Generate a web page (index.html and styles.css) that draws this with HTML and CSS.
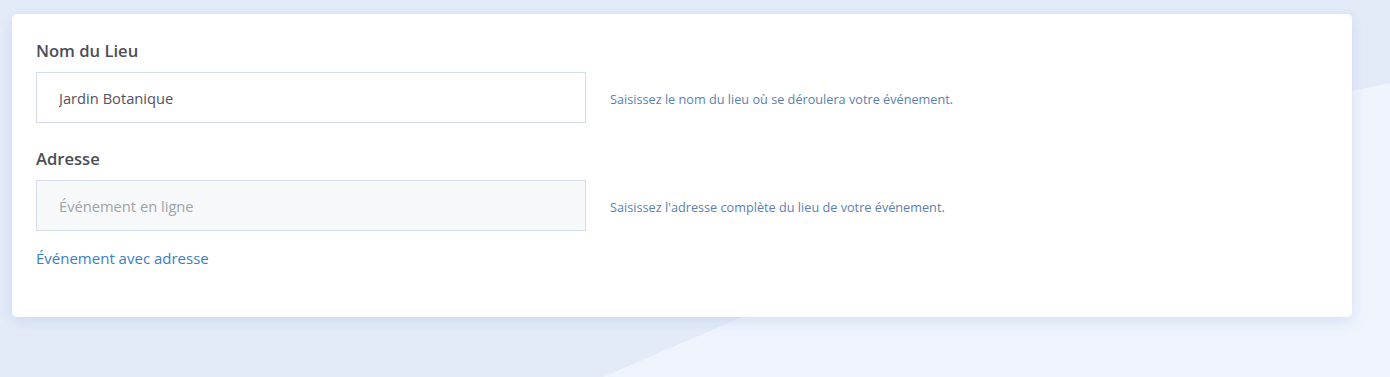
FILE: index.html
```
<!DOCTYPE html>
<html lang="fr">

<head>
    <meta charset="UTF-8">
    <meta name="viewport" content="width=device-width, initial-scale=1.0">
    <title>Lieu de l'événement</title>
    <link rel="stylesheet" href="styles.css">
</head>

<body>
    <div class="card">
        <div class="field">
            <label for="venueName">Nom du Lieu</label>
            <div class="row">
                <input type="text" id="venueName" value="Jardin Botanique">
                <p class="help">Saisissez le nom du lieu où se déroulera votre événement.</p>
            </div>
        </div>

        <div class="field">
            <label for="address">Adresse</label>
            <div class="row">
                <input type="text" id="address" class="disabled" placeholder="Événement en ligne" disabled>
                <p class="help">Saisissez l'adresse complète du lieu de votre événement.</p>
            </div>
        </div>

        <a href="#" class="toggle">Événement avec adresse</a>
    </div>
</body>

</html>
```

FILE: styles.css
```
*,
*::before,
*::after {
    box-sizing: border-box;
}

body {
    margin: 0;
    min-height: 377px;
    padding: 14px 38px 0 12px;
    background-color: #e4ebf8;
    font-family: "Open Sans", Lato, sans-serif;
    position: relative;
    overflow: hidden;
}

/* lighter diagonal band in the background */
body::before {
    content: "";
    position: absolute;
    inset: 0;
    background-color: #eff4fd;
    clip-path: polygon(603px 377px, 740px 318px, 1352px 91px, 1390px 83px, 1390px 377px);
}

.card {
    position: relative;
    background-color: #ffffff;
    border-radius: 5px;
    box-shadow: 0 4px 14px rgba(160, 185, 230, 0.35);
    padding: 26px 24px 0 24px;
    height: 303px;
}

.field + .field {
    margin-top: 25px;
}

label {
    display: block;
    font-size: 16.6px;
    font-weight: 600;
    color: #4d4d55;
    margin-bottom: 10px;
    line-height: 22px;
}

.row {
    display: flex;
    align-items: center;
    gap: 24px;
}

input {
    width: 550px;
    height: 51px;
    padding: 0 22px;
    font-family: inherit;
    font-size: 14.7px;
    color: #52525c;
    border: 1px solid #d3dcea;
    border-radius: 0;
    background-color: #ffffff;
    outline: none;
}

input.disabled {
    background-color: #f6f8fa;
}

input::placeholder {
    color: #a1a3a8;
}

.help {
    margin: 2px 0 0 0;
    font-size: 12.7px;
    color: #5b7fae;
}

.toggle {
    display: inline-block;
    margin-top: 16px;
    font-size: 15px;
    line-height: 22px;
    color: #3b7dc4;
    text-decoration: none;
}
```
